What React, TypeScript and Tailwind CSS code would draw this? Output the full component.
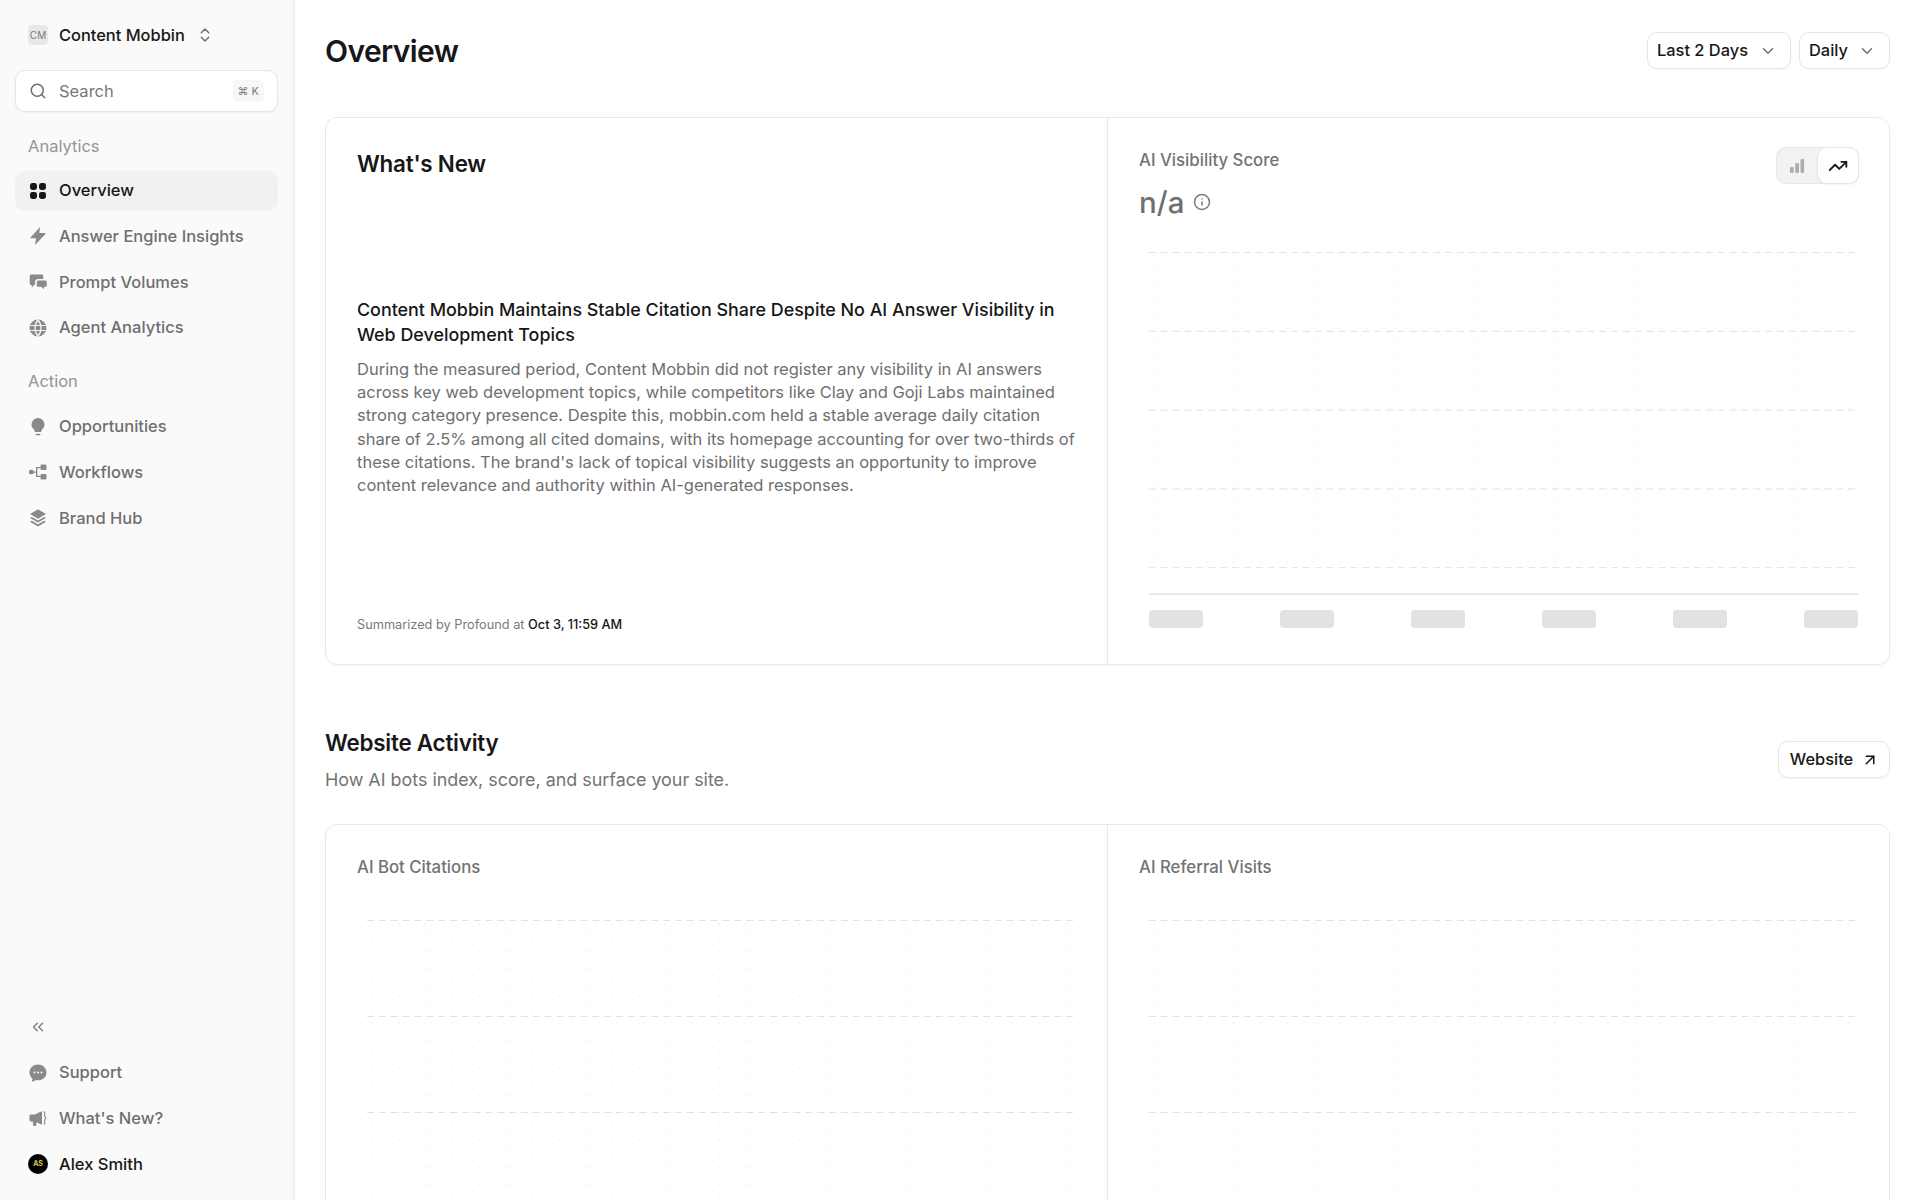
import { ChevronDown, ChevronsLeft, ChevronsUpDown, Info, Search, ArrowUpRight, TrendingUp } from 'lucide-react';
import type { ReactNode } from 'react';

function GridIcon() {
  return (
    <svg width="18" height="18" viewBox="0 0 18 18" fill="currentColor">
      <rect x="1" y="1" width="7" height="7" rx="2.4" />
      <rect x="10" y="1" width="7" height="7" rx="2.4" />
      <rect x="1" y="10" width="7" height="7" rx="2.4" />
      <rect x="10" y="10" width="7" height="7" rx="2.4" />
    </svg>
  );
}

function BoltIcon() {
  return (
    <svg width="18" height="18" viewBox="0 0 18 18" fill="currentColor">
      <path d="M11 0 1.500 10.400c-.3.4 0 .9.400.9h5.100L6 18l10.400-11c.3-.4 0-.9-.4-.9h-5.600z" />
    </svg>
  );
}

function ChatsIcon() {
  return (
    <svg width="18" height="18" viewBox="0 0 18 18" fill="currentColor">
      <path d="M2.300 1.500h10.400c1 0 1.500.5 1.500 1.400V6H9.200C7.400 6 6 7.300 6 9.100v2.900H4.700L2.800 15v-3h-.5c-1 0-1.600-.6-1.600-1.500V3.100c0-1 .6-1.600 1.600-1.600z" />
      <path d="M9.400 7.400h6.800c1 0 1.600.6 1.600 1.600v3.200c0 1-.6 1.600-1.600 1.600H15v2.400l-2.800-2.400H9.400c-1 0-1.600-.6-1.600-1.600V9c0-1 .6-1.600 1.600-1.600z" />
    </svg>
  );
}

function GlobeIcon() {
  return (
    <svg width="18" height="18" viewBox="0 0 18 18" fill="none" stroke="currentColor">
      <circle cx="9" cy="9" r="8" fill="currentColor" strokeWidth="1" />
      <path d="M1.500 6.500h15M1.500 11.500h15M9 1c-4 4.500-4 11.500 0 16M9 1c4 4.500 4 11.500 0 16" stroke="#fafafa" strokeWidth="1.200" />
    </svg>
  );
}

function BulbIcon() {
  return (
    <svg width="18" height="18" viewBox="0 0 18 18" fill="currentColor">
      <path d="M9 0a6.500 6.500 0 0 0-6.500 6.500c0 2.400 1.200 3.800 2.400 5.100.6.600.9 1.300 1 2.400h6.200c.1-1.100.4-1.800 1-2.400 1.200-1.300 2.400-2.700 2.400-5.100A6.500 6.500 0 0 0 9 0z" />
      <rect x="6.500" y="15.700" width="5" height="1.600" rx=".8" />
    </svg>
  );
}

function FlowIcon() {
  return (
    <svg width="18" height="18" viewBox="0 0 18 18" fill="currentColor">
      <rect x="0" y="6.800" width="4.500" height="4.500" rx="1.500" />
      <rect x="11.500" y="1.500" width="6" height="5.500" rx="1.200" />
      <rect x="11.500" y="11" width="6" height="5.500" rx="1.200" />
      <path d="M4 8.500h3V4h4.500v1.200H8.300v7.600h3.200V14H7V9.700H4z" />
    </svg>
  );
}

function LayersIcon() {
  return (
    <svg width="18" height="18" viewBox="0 0 18 18" fill="currentColor">
      <path d="M9 .3 1 5l8 4.700L17 5z" />
      <path d="M2.800 7.900 1 8.900l8 4.700 8-4.700-1.800-1L9 11.500z" />
      <path d="M2.800 11.700 1 12.700l8 4.700 8-4.700-1.800-1L9 15.300z" />
    </svg>
  );
}

function SupportIcon() {
  return (
    <svg width="18" height="18" viewBox="0 0 18 18" fill="currentColor">
      <path fillRule="evenodd" d="M9 .5c4.600 0 8.500 3.300 8.500 7.900s-3.900 7.900-8.500 7.900c-.8 0-1.500-.1-2.200-.3C5.500 17 4 17.500 2.500 17.500c.6-.8 1-1.800 1-2.900C1.600 13.200.5 11 .5 8.400.5 3.800 4.400.5 9 .5zM5.500 7.400a1 1 0 1 0 0 2 1 1 0 0 0 0-2zm3.500 0a1 1 0 1 0 0 2 1 1 0 0 0 0-2zm3.500 0a1 1 0 1 0 0 2 1 1 0 0 0 0-2z" />
    </svg>
  );
}

function MegaphoneIcon() {
  return (
    <svg width="18" height="18" viewBox="0 0 18 18" fill="currentColor">
      <path d="M.5 7c0-1 .6-1.600 1.600-1.600h3.800L12.100 2.500c.5-.2.900 0 .9.600v11.800c0 .6-.4.800-.9.600L7.500 13.200l-.2 2.700c0 .7-.5 1.100-1.200 1.100h-.8c-.7 0-1.100-.4-1.200-1.100l-.3-3.300H2.100c-1 0-1.600-.6-1.600-1.600z" />
      <path d="M14.800 2.500c.6.300.9.800.9 1.500v3c0 .6.300 1 .9 1.200v1.600c-.6.200-.9.600-.9 1.200v3c0 .7-.3 1.200-.9 1.500" fill="none" stroke="currentColor" strokeWidth="1.100" />
    </svg>
  );
}

function BarsIcon() {
  return (
    <svg width="16" height="16" viewBox="0 0 16 16" fill="currentColor">
      <rect x="1" y="9" width="3.600" height="6" rx="1" />
      <rect x="6.300" y="5" width="3.600" height="10" rx="1" />
      <rect x="11.500" y="1" width="3.600" height="14" rx="1" />
    </svg>
  );
}

function NavItem({ icon, label, active }: { icon: ReactNode; label: string; active?: boolean }) {
  return (
    <div
      className={`flex h-10 items-center gap-[12px] rounded-[10px] pl-[14px] text-[16.500px] font-medium ${
        active ? 'bg-[#f1f1f1] text-[#171717]' : 'text-[#6f6f6f]'
      }`}
    >
      <span className={active ? 'text-[#171717]' : 'text-[#8a8a8a]'}>{icon}</span>
      <span>{label}</span>
    </div>
  );
}

function SelectButton({ label, className }: { label: string; className: string }) {
  return (
    <button
      type="button"
      className={`flex h-[37px] items-center justify-between rounded-[10px] border border-[#e6e6e6] bg-white pl-[9px] pr-[13px] text-[16.400px] font-medium text-[#171717] shadow-[0_1px_2px_rgba(0,0,0,0.05)] ${className}`}
    >
      {label}
      <ChevronDown size={18} strokeWidth={2} className="text-[#6f6f6f]" />
    </button>
  );
}

// faint dotted placeholder plot with dashed rules
function ChartGrid({ lines, gap, height }: { lines: number; gap: number; height: number }) {
  const id = `dots-${lines}-${gap}`;
  return (
    <svg width="708" height={height} className="block">
      <defs>
        <pattern id={id} width="26.700" height="18" patternUnits="userSpaceOnUse">
          <circle cx="5" cy="4" r="0.800" fill="#e9e9e9" />
          <circle cx="14" cy="4" r="0.600" fill="#f3f3f3" />
          <circle cx="22" cy="4" r="0.600" fill="#f5f5f5" />
          <circle cx="5" cy="13" r="0.800" fill="#ececec" />
          <circle cx="10" cy="13" r="0.600" fill="#f5f5f5" />
          <circle cx="18" cy="13" r="0.600" fill="#f3f3f3" />
        </pattern>
      </defs>
      <rect width="708" height={height} fill={`url(#${id})`} />
      {Array.from({ length: lines }).map((_, i) => (
        <line
          key={i}
          x1="0"
          x2="706"
          y1={i * gap + 0.5}
          y2={i * gap + 0.5}
          stroke="#e2e2e2"
          strokeDasharray="7 4.850"
        />
      ))}
    </svg>
  );
}

export default function App() {
  return (
    <div className="flex h-[1200px] overflow-hidden bg-white font-['Inter',sans-serif] text-[#171717]">
      <aside className="flex w-[295px] shrink-0 flex-col border-r-2 border-[#efefef] bg-[#fafafa] pb-[16px] pl-[15px] pr-[15px]">
        <div className="flex h-[70px] items-center gap-[11px] pl-[13px]">
          <span className="flex h-5 w-5 items-center justify-center rounded-[4px] bg-[#e8e8e8] text-[10px] text-[#7a7a7a]">CM</span>
          <span className="text-[16.400px] font-medium">Content Mobbin</span>
          <ChevronsUpDown size={18} className="text-[#707070]" />
        </div>
        <div className="flex h-[42px] items-center gap-[12px] rounded-[10px] border border-[#e6e6e6] bg-white pl-[13px] pr-[13px] shadow-[0_1px_2px_rgba(0,0,0,0.06)]">
          <Search size={18} className="text-[#6f6f6f]" />
          <span className="flex-1 text-[16.500px] text-[#767676]">Search</span>
          <span className="flex h-[22px] items-center rounded-[5px] bg-[#f7f7f7] px-[5px] text-[11px] text-[#7a7a7a]">⌘ K</span>
        </div>
        <div className="pb-[12px] pl-[13px] pt-[22px] text-[16.500px] text-[#949494]">Analytics</div>
        <div className="flex flex-col gap-[5.700px]">
          <NavItem icon={<GridIcon />} label="Overview" active />
          <NavItem icon={<BoltIcon />} label="Answer Engine Insights" />
          <NavItem icon={<ChatsIcon />} label="Prompt Volumes" />
          <NavItem icon={<GlobeIcon />} label="Agent Analytics" />
        </div>
        <div className="pb-[13px] pl-[13px] pt-[21px] text-[16.500px] text-[#949494]">Action</div>
        <div className="flex flex-col gap-[5.700px]">
          <NavItem icon={<BulbIcon />} label="Opportunities" />
          <NavItem icon={<FlowIcon />} label="Workflows" />
          <NavItem icon={<LayersIcon />} label="Brand Hub" />
        </div>
        <div className="mt-auto flex flex-col gap-[5.700px]">
          <div className="flex h-10 items-center pl-[14px] text-[#808080]">
            <ChevronsLeft size={18} />
          </div>
          <NavItem icon={<SupportIcon />} label="Support" />
          <NavItem icon={<MegaphoneIcon />} label="What's New?" />
          <div className="flex h-10 items-center gap-[11px] pl-[13px] text-[16.500px] font-medium">
            <span className="flex h-5 w-5 items-center justify-center rounded-full bg-black text-[7px] font-bold text-[#d9c94a]">AS</span>
            Alex Smith
          </div>
        </div>
      </aside>

      <main className="min-w-0 flex-1 overflow-hidden pl-[30px] pr-[30px]">
        <header className="flex h-[117px] items-start justify-between pt-[32px]">
          <h1 className="mt-px text-[30px] font-semibold leading-9 tracking-[-0.02em]">Overview</h1>
          <div className="flex gap-[8px]">
            <SelectButton label="Last 2 Days" className="w-[144px]" />
            <SelectButton label="Daily" className="w-[91px]" />
          </div>
        </header>

        <section className="grid h-[548px] grid-cols-[782px_1fr] rounded-[12px] border border-[#e9e9e9] shadow-[0_1px_2px_rgba(0,0,0,0.04)]">
          <div className="flex flex-col border-r border-[#e9e9e9] pb-[31px] pl-[31px] pr-[30px] pt-[30px]">
            <h2 className="text-[22.400px] font-semibold leading-[32px] tracking-[-0.01em]">What's New</h2>
            <h3 className="mt-[118px] text-[17.900px] font-[480] leading-[24.500px]">
              Content Mobbin Maintains Stable Citation Share Despite No AI Answer Visibility in Web Development Topics
            </h3>
            <p className="mt-[11px] text-[16.500px] leading-[23.200px] text-[#6f6f6f]">
              During the measured period, Content Mobbin did not register any visibility in AI answers across key web development topics, while competitors like Clay and Goji Labs maintained strong category presence. Despite this, mobbin.com held a stable average daily citation share of 2.5% among all cited domains, with its homepage accounting for over two-thirds of these citations. The brand's lack of topical visibility suggests an opportunity to improve content relevance and authority within AI-generated responses.
            </p>
            <div className="mt-auto text-[12.750px] leading-4 text-[#7a7a7a]">
              Summarized by Profound at <span className="font-medium text-[#171717]">Oct 3, 11:59 AM</span>
            </div>
          </div>
          <div className="flex flex-col pl-[31px] pr-[31px] pt-[32px]">
            <div className="flex items-start justify-between">
              <div>
                <div className="text-[16.800px] font-medium leading-5 text-[#737373]">AI Visibility Score</div>
                <div className="mt-[14px] flex items-center gap-[9px] text-[29.500px] font-medium leading-9 text-[#6f6f6f]">
                  n/a
                  <Info size={18} className="text-[#7a7a7a]" />
                </div>
              </div>
              <div className="mr-[-1px] mt-[-3px] flex h-[37px] w-[83px] rounded-[10px] bg-[#f2f2f2] shadow-[inset_0_0_0_1px_#e8e8e8]">
                <span className="flex w-[41px] items-center justify-center text-[#ababab]"><BarsIcon /></span>
                <span className="flex w-[42px] items-center justify-center rounded-[10px] border border-[#e6e6e6] bg-white shadow-[0_1px_2px_rgba(0,0,0,0.05)]">
                  <TrendingUp size={20} strokeWidth={2.200} />
                </span>
              </div>
            </div>
            <div className="ml-[10px] mt-[32px]">
              <ChartGrid lines={5} gap={78.800} height={316} />
            </div>
            <div className="ml-[10px] mt-[25px] border-t-2 border-[#e8e8e8] pt-[15px]">
              <div className="flex justify-between">
                {[0, 1, 2, 3, 4, 5].map((i) => (
                  <span key={i} className="h-[18px] w-[54px] rounded-[4px] bg-[#e2e2e3]" />
                ))}
              </div>
            </div>
          </div>
        </section>

        <div className="flex items-start justify-between pt-[62px]">
          <div>
            <h2 className="text-[22.400px] font-semibold leading-8 tracking-[-0.01em]">Website Activity</h2>
            <p className="mt-[9px] text-[17.900px] leading-6 text-[#737373]">How AI bots index, score, and surface your site.</p>
          </div>
          <button
            type="button"
            className="mt-[14px] flex h-[37px] w-[112px] items-center justify-center gap-[8px] rounded-[10px] border border-[#e6e6e6] bg-white pl-[1px] text-[16.400px] font-medium shadow-[0_1px_2px_rgba(0,0,0,0.05)]"
          >
            Website
            <ArrowUpRight size={18} />
          </button>
        </div>

        <section className="mt-[32px] grid h-[500px] grid-cols-[782px_1fr] rounded-[12px] border border-[#e9e9e9]">
          <div className="border-r border-[#e9e9e9] pl-[31px] pt-[32px]">
            <div className="text-[16.800px] font-medium leading-5 text-[#737373]">AI Bot Citations</div>
            <div className="ml-[10px] mt-[43px]">
              <ChartGrid lines={4} gap={96} height={330} />
            </div>
          </div>
          <div className="pl-[31px] pt-[32px]">
            <div className="text-[16.800px] font-medium leading-5 text-[#737373]">AI Referral Visits</div>
            <div className="ml-[10px] mt-[43px]">
              <ChartGrid lines={4} gap={96} height={330} />
            </div>
          </div>
        </section>
      </main>
    </div>
  );
}
